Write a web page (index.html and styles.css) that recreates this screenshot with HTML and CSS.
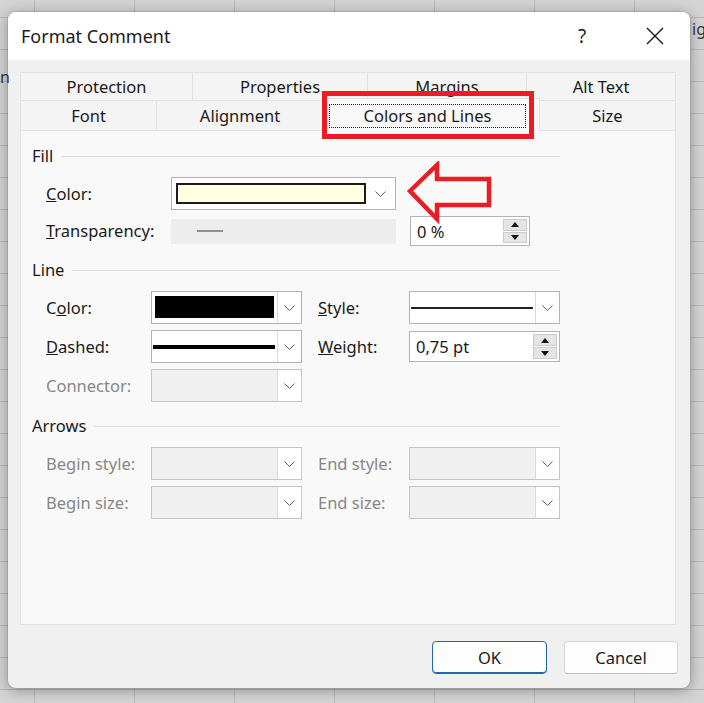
FILE: index.html
```html
<!DOCTYPE html>
<html>

<head>
    <link rel="stylesheet" href="styles.css">
</head>

<body>
    <span class="cell-text left">n</span>
    <span class="cell-text right">ig</span>
    <div class="window">
        <div class="titlebar">
            <span class="title">Format Comment</span>
            <span class="help">?</span>
            <span class="close">
                <svg width="18" height="18" viewBox="0 0 18 18">
                    <path d="M1 1L17 17M17 1L1 17" stroke="#1a1a1a" stroke-width="1.4" fill="none" />
                </svg>
            </span>
        </div>
        <div class="dialog-body">
            <div class="tabs">
                <div class="tab-row back">
                    <div class="tab">Protection</div>
                    <div class="tab">Properties</div>
                    <div class="tab">Margins</div>
                    <div class="tab">Alt Text</div>
                </div>
                <div class="tab-row front">
                    <div class="tab">Font</div>
                    <div class="tab">Alignment</div>
                    <div class="tab selected">
                        <span class="focus">Colors and Lines</span>
                        <div class="mark"></div>
                    </div>
                    <div class="tab">Size</div>
                </div>
            </div>

            <div class="panel">
                <div class="section">
                    <div class="group-title"><span>Fill</span><i></i></div>
                    <div class="grid fill-grid">
                        <label><u>C</u>olor:</label>
                        <div class="combo">
                            <div class="field wide"><div class="swatch yellow"></div></div>
                            <div class="drop plain">
                                <svg width="11" height="6" viewBox="0 0 11 6"><path d="M0.5 0.5L5.5 5.5L10.5 0.5" stroke="#5c5c5c" fill="none" /></svg>
                            </div>
                        </div>
                        <div class="arrow-cell">
                            <svg class="callout" width="90" height="64" viewBox="0 0 90 64">
                                <polygon points="4,30 31,4 31,18 83,18 83,44 31,44 31,58" fill="none" stroke="#ec1c24" stroke-width="4.5" stroke-linejoin="miter" />
                            </svg>
                        </div>

                        <label><u>T</u>ransparency:</label>
                        <div class="slider"><i></i></div>
                        <div class="spin">
                            <span>0 %</span>
                            <div class="spin-btns"><b class="up"></b><b class="down"></b></div>
                        </div>
                    </div>
                </div>

                <div class="section">
                    <div class="group-title"><span>Line</span><i></i></div>
                    <div class="grid line-grid">
                        <label>C<u>o</u>lor:</label>
                        <div class="combo">
                            <div class="field"><div class="swatch black"></div></div>
                            <div class="drop">
                                <svg width="11" height="6" viewBox="0 0 11 6"><path d="M0.5 0.5L5.5 5.5L10.5 0.5" stroke="#5c5c5c" fill="none" /></svg>
                            </div>
                        </div>
                        <label class="second"><u>S</u>tyle:</label>
                        <div class="combo">
                            <div class="field flush"><div class="stroke thin"></div></div>
                            <div class="drop">
                                <svg width="11" height="6" viewBox="0 0 11 6"><path d="M0.5 0.5L5.5 5.5L10.5 0.5" stroke="#5c5c5c" fill="none" /></svg>
                            </div>
                        </div>

                        <label><u>D</u>ashed:</label>
                        <div class="combo">
                            <div class="field flush"><div class="stroke thick"></div></div>
                            <div class="drop">
                                <svg width="11" height="6" viewBox="0 0 11 6"><path d="M0.5 0.5L5.5 5.5L10.5 0.5" stroke="#5c5c5c" fill="none" /></svg>
                            </div>
                        </div>
                        <label class="second"><u>W</u>eight:</label>
                        <div class="spin tall">
                            <span>0,75 pt</span>
                            <div class="spin-btns"><b class="up"></b><b class="down"></b></div>
                        </div>

                        <label class="off">Connector:</label>
                        <div class="combo disabled">
                            <div class="field"></div>
                            <div class="drop">
                                <svg width="11" height="6" viewBox="0 0 11 6"><path d="M0.5 0.5L5.5 5.5L10.5 0.5" stroke="#5c5c5c" fill="none" /></svg>
                            </div>
                        </div>
                    </div>
                </div>

                <div class="section">
                    <div class="group-title"><span>Arrows</span><i></i></div>
                    <div class="grid line-grid arrows">
                        <label class="off">Begin style:</label>
                        <div class="combo disabled">
                            <div class="field"></div>
                            <div class="drop">
                                <svg width="11" height="6" viewBox="0 0 11 6"><path d="M0.5 0.5L5.5 5.5L10.5 0.5" stroke="#5c5c5c" fill="none" /></svg>
                            </div>
                        </div>
                        <label class="off second">End style:</label>
                        <div class="combo disabled">
                            <div class="field"></div>
                            <div class="drop">
                                <svg width="11" height="6" viewBox="0 0 11 6"><path d="M0.5 0.5L5.5 5.5L10.5 0.5" stroke="#5c5c5c" fill="none" /></svg>
                            </div>
                        </div>

                        <label class="off">Begin size:</label>
                        <div class="combo disabled">
                            <div class="field"></div>
                            <div class="drop">
                                <svg width="11" height="6" viewBox="0 0 11 6"><path d="M0.5 0.5L5.5 5.5L10.5 0.5" stroke="#5c5c5c" fill="none" /></svg>
                            </div>
                        </div>
                        <label class="off second">End size:</label>
                        <div class="combo disabled">
                            <div class="field"></div>
                            <div class="drop">
                                <svg width="11" height="6" viewBox="0 0 11 6"><path d="M0.5 0.5L5.5 5.5L10.5 0.5" stroke="#5c5c5c" fill="none" /></svg>
                            </div>
                        </div>
                    </div>
                </div>
            </div>

            <div class="buttons">
                <button class="default">OK</button>
                <button>Cancel</button>
            </div>
        </div>
    </div>
</body>

</html>
```

FILE: styles.css
```css
* {
    box-sizing: border-box;
}

body {
    position: relative;
    margin: 0;
    height: 703px;
    padding: 12px 0 0 8px;
    overflow: hidden;
    background-color: #d4d4d4;
    background-image:
        linear-gradient(#b8b8b8 1px, transparent 1px),
        linear-gradient(90deg, #b8b8b8 1px, transparent 1px);
    background-size: 100px 32px;
    background-position: 34px 17px;
    font-family: "Noto Sans", "DejaVu Sans", sans-serif;
    font-size: 16.5px;
    color: #1a1a1a;
}

.cell-text {
    position: absolute;
    font-size: 16px;
    color: #333;
}

.cell-text.left {
    left: 0;
    top: 66px;
}

.cell-text.right {
    left: 692px;
    top: 18px;
}

.window {
    width: 682px;
    height: 676px;
    border-radius: 8px;
    background: #f0f0f0;
    box-shadow: 0 2px 14px rgba(0, 0, 0, 0.35), 0 0 0 1px rgba(0, 0, 0, 0.08);
    overflow: hidden;
    display: flex;
    flex-direction: column;
}

.titlebar {
    height: 48px;
    flex: none;
    background: #fff;
    display: flex;
    align-items: center;
    padding-left: 13px;
}

.title {
    flex: 1;
    font-size: 18px;
}

.help {
    width: 46px;
    margin-right: 15px;
    text-align: center;
    font-size: 19px;
}

.close {
    width: 70px;
    display: flex;
    justify-content: center;
}

.dialog-body {
    flex: 1;
    padding: 12px 14px 0 12px;
    display: flex;
    flex-direction: column;
}

/* tabs */

.tab-row {
    display: grid;
}

.back {
    grid-template-columns: 173px 175px 159px 149px;
    height: 28px;
}

.front {
    grid-template-columns: 137px 167px 216px 136px;
    height: 30px;
}

.tab {
    background: #f4f4f4;
    border: 1px solid #e1e1e1;
    border-left: none;
    border-bottom: none;
    display: flex;
    align-items: center;
    justify-content: center;
    line-height: 20px;
}

.tab:first-child {
    border-left: 1px solid #e1e1e1;
}

.tab.selected {
    position: relative;
    z-index: 2;
    margin: -2px 0 -1px;
    background: #f9f9f9;
    align-items: stretch;
    justify-content: stretch;
}

.focus {
    flex: 1;
    margin: 5px 13px 3px 5px;
    border: 1px dotted #222;
    display: flex;
    align-items: center;
    justify-content: center;
}

.mark {
    position: absolute;
    left: -2px;
    right: 5px;
    top: -8px;
    bottom: -8px;
    border: 5px solid #ec1c24;
}

/* page */

.panel {
    height: 495px;
    flex: none;
    background: #f9f9f9;
    border: 1px solid #e1e1e1;
    padding: 15px 0 0 11px;
}

.section + .section {
    margin-top: 14px;
}

.group-title {
    width: 528px;
    height: 20px;
    display: flex;
    align-items: center;
    gap: 8px;
    line-height: 20px;
}

.group-title i {
    flex: 1;
    height: 1px;
    background: #dcdcdc;
}

.grid {
    display: grid;
    margin-top: 11px;
    padding-left: 14px;
    row-gap: 6px;
    align-items: center;
}

.fill-grid {
    grid-template-columns: 125px 225px 134px;
    grid-template-rows: 33px 30px;
}

.fill-grid .arrow-cell,
.fill-grid .spin {
    margin-left: 14px;
}

.line-grid {
    grid-template-columns: 105px 151px 107px 151px;
    grid-template-rows: repeat(3, 33px);
}

.line-grid.arrows {
    grid-template-rows: repeat(2, 33px);
}

label {
    line-height: 20px;
    white-space: nowrap;
}

label.second {
    padding-left: 16px;
}

label.off {
    color: #878787;
}

.combo {
    height: 33px;
    display: flex;
    border: 1px solid #b3b3b3;
    background: #fff;
}

.field {
    flex: 1;
    display: flex;
    padding: 4px 3px 5px;
}

.field.wide {
    padding: 5px 0 5px 4px;
}

.field.flush {
    padding: 0 2px 0 1px;
    align-items: center;
}

.swatch {
    flex: 1;
}

.swatch.yellow {
    background: #ffffe1;
    border: 2px solid #1c1c1c;
}

.swatch.black {
    background: #000;
}

.stroke {
    flex: 1;
    background: #000;
}

.stroke.thin {
    height: 2px;
    background: #222;
}

.stroke.thick {
    height: 4px;
}

.drop {
    width: 24px;
    flex: none;
    display: flex;
    align-items: center;
    justify-content: center;
    border-left: 1px solid #dadada;
    background: #fff;
}

.drop.plain {
    width: 29px;
    border-left: none;
}

.combo.disabled {
    border-color: #c4c4c4;
}

.combo.disabled .field {
    background: #f0f0f0;
}

.arrow-cell {
    position: relative;
    align-self: stretch;
}

.callout {
    position: absolute;
    left: -4px;
    top: -16px;
}

.slider {
    height: 25px;
    background: #ededed;
    display: flex;
    align-items: center;
    padding-left: 26px;
}

.slider i {
    width: 26px;
    height: 2px;
    background: #8f8f8f;
}

.spin {
    height: 30px;
    border: 1px solid #b3b3b3;
    background: #fff;
    display: flex;
    align-items: center;
    padding-left: 6px;
}

.spin.tall {
    height: 31px;
}

.spin span {
    flex: 1;
}

.spin-btns {
    width: 26px;
    align-self: stretch;
    display: flex;
    flex-direction: column;
    gap: 1px;
    padding: 2px 2px 2px 0;
}

.spin-btns b {
    flex: 1;
    background: #e5e5e5;
    border: 1px solid #cbcbcb;
    display: flex;
    align-items: center;
    justify-content: center;
}

.spin-btns b::before {
    content: '';
    border-left: 4px solid transparent;
    border-right: 4px solid transparent;
}

.spin-btns .up::before {
    border-bottom: 5px solid #111;
}

.spin-btns .down::before {
    border-top: 5px solid #111;
}

/* footer buttons */

.buttons {
    display: flex;
    justify-content: flex-end;
    gap: 17px;
    margin-top: 16px;
    margin-right: -2px;
}

button {
    width: 115px;
    height: 33px;
    padding: 0;
    font-family: inherit;
    font-size: 16.5px;
    color: #1a1a1a;
    background: #fdfdfd;
    border: 1px solid #d3d3d3;
    border-bottom-color: #bdbdbd;
    border-radius: 4px;
}

button + button {
    width: 114px;
}

button.default {
    border-color: #2466ad;
    box-shadow: inset 0 -1px 0 #2466ad;
}
```
